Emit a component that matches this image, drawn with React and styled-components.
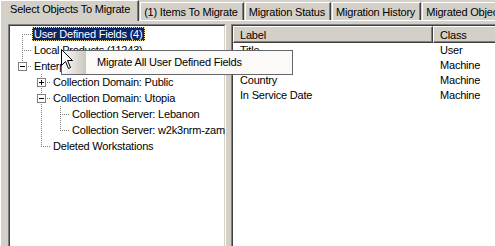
import React from 'react';
import styled, { createGlobalStyle } from 'styled-components';

const GlobalStyle = createGlobalStyle`
  html, body {
    margin: 0;
    padding: 0;
  }
  body {
    background: #d4d0c8;
    overflow: hidden;
    font-family: "Liberation Sans", Arial, sans-serif;
    font-size: 11px;
    letter-spacing: -0.2px;
    color: #000;
  }
`;

const dotV = 'repeating-linear-gradient(#808080 0 1px, transparent 1px 2px)';
const dotH = 'repeating-linear-gradient(90deg, #808080 0 1px, transparent 1px 2px)';

const Window = styled.div`
  position: relative;
  width: 495px;
  height: 246px;
  overflow: hidden;
  background: #d4d0c8;
`;

const TabStrip = styled.div`
  display: flex;
  align-items: flex-end;
  height: 21px;
  white-space: nowrap;
  background: linear-gradient(#fff, #fff) left bottom / 100% 1px no-repeat;
`;

const Tab = styled.div`
  flex: 0 0 auto;
  box-sizing: border-box;
  background: #d4d0c8;
  border-left: 1px solid #fff;
  border-top: 1px solid #fff;
  border-right: 1px solid #404040;
  box-shadow: inset -1px 0 #808080;
  line-height: 13px;
  height: ${p => (p.$active ? 21 : 18)}px;
  padding: ${p => (p.$active ? '2px 8px 0 9px' : '3px 5px 0 3px')};
  margin: ${p => (p.$active ? '0 1px 0 0' : '0 1px 1px 0')};
`;

const TabPage = styled.div`
  display: flex;
  gap: 5px;
  border-left: 1px solid #fff;
  padding: 3px 0 0 7px;
`;

const Sunken = styled.div`
  flex: 0 0 ${p => p.$w}px;
  width: ${p => p.$w}px;
  box-sizing: border-box;
  height: 240px;
  border: 1px solid;
  border-color: #808080 #fff #fff #808080;
  overflow: hidden;
`;

const SunkenInner = styled.div`
  height: 100%;
  box-sizing: border-box;
  border: 1px solid;
  border-color: #404040 #d4d0c8 #d4d0c8 #404040;
  background: #fff;
`;

const TreeBody = styled.div`
  padding: 0 0 0 3px;
`;

const Row = styled.div`
  display: flex;
  align-items: center;
  height: 16px;
  white-space: nowrap;
`;

const Rail = styled.span`
  flex: 0 0 19px;
  height: 16px;
  background: ${p => (p.$on ? dotV : 'none')} 9px 0 / 1px 16px no-repeat;
`;

const Joint = styled.span`
  flex: 0 0 19px;
  height: 16px;
  box-sizing: border-box;
  display: flex;
  align-items: center;
  padding-left: 5px;
  background-image: ${dotV}, ${dotH};
  background-repeat: no-repeat;
  background-size: 1px ${p => (p.$last ? 9 : 16) - (p.$first ? 8 : 0)}px, 10px 1px;
  background-position: 9px ${p => (p.$first ? 8 : 0)}px, 9px 8px;
`;

const Expander = styled.span`
  width: 9px;
  height: 9px;
  box-sizing: border-box;
  border: 1px solid #808080;
  background-color: #fff;
  background-image: linear-gradient(#000, #000)
    ${p => (p.$open ? '' : ', linear-gradient(#000, #000)')};
  background-size: 5px 1px ${p => (p.$open ? '' : ', 1px 5px')};
  background-position: center ${p => (p.$open ? '' : ', center')};
  background-repeat: no-repeat;
`;

const NodeLabel = styled.span`
  height: 14px;
  line-height: 12px;
  box-sizing: border-box;
  padding: 0 1px;
  border: 1px ${p => (p.$selected ? 'dotted #f0d890' : 'solid transparent')};
  background: ${p => (p.$selected ? '#0a246a' : 'transparent')};
  color: ${p => (p.$selected ? '#fff' : '#000')};
`;

const ListHeader = styled.div`
  display: flex;
  height: 17px;
`;

const HeaderCell = styled.div`
  flex: 0 0 ${p => p.$w}px;
  box-sizing: border-box;
  height: 17px;
  line-height: 17px;
  padding-left: 6px;
  border: 1px solid;
  border-color: #fff #404040 #404040 #fff;
  box-shadow: inset -1px -1px #808080;
  background: #d4d0c8;
`;

const ListRow = styled.div`
  display: flex;
  height: 15px;
  line-height: 14px;
  white-space: nowrap;
`;

const Cell = styled.div`
  flex: 0 0 ${p => p.$w}px;
  padding-left: 7px;
  box-sizing: border-box;
`;

const Menu = styled.div`
  position: absolute;
  left: 61px;
  top: 50px;
  width: 232px;
  height: 25px;
  box-sizing: border-box;
  display: flex;
  border: 1px solid #666;
  background: #fbfaf8;
  white-space: nowrap;
`;

const MenuStrip = styled.div`
  flex: 0 0 24px;
  background: linear-gradient(90deg, #fdfdfc, #c9c6bd);
`;

const MenuText = styled.div`
  padding-left: 11px;
  line-height: 23px;
`;

const Cursor = styled.svg`
  position: absolute;
  left: 61px;
  top: 49px;
`;

const tree = [
  { label: 'User Defined Fields (4)', selected: true },
  { label: 'Local Products (11243)' },
  {
    label: 'Enterprise', open: true, children: [
      { label: 'Collection Domain: Public', children: [{ label: '' }] },
      {
        label: 'Collection Domain: Utopia', open: true, children: [
          { label: 'Collection Server: Lebanon' },
          { label: 'Collection Server: w2k3nrm-zam' },
        ]
      },
      { label: 'Deleted Workstations' },
    ]
  },
];

function flatten(nodes, lasts, rows) {
  nodes.forEach((node, i) => {
    const last = i === nodes.length - 1;
    rows.push({ node, rails: lasts.map(l => !l), first: lasts.length === 0 && i === 0, last });
    if (node.open && node.children) flatten(node.children, lasts.concat(last), rows);
  });
  return rows;
}

const fields = [
  ['Title', 'User'],
  ['', 'Machine'],
  ['Country', 'Machine'],
  ['In Service Date', 'Machine'],
];

const tabs = [
  'Select Objects To Migrate',
  '(1) Items To Migrate',
  'Migration Status',
  'Migration History',
  'Migrated Objects',
];

export default function App() {
  const rows = flatten(tree, [], []);
  return (
    <Window>
      <GlobalStyle />
      <TabStrip>
        {tabs.map((t, i) => <Tab key={t} $active={i === 0}>{t}</Tab>)}
      </TabStrip>
      <TabPage>
        <Sunken $w={218}>
          <SunkenInner>
            <TreeBody>
              {rows.map(({ node, rails, first, last }, i) => (
                <Row key={i}>
                  {rails.map((on, k) => <Rail key={k} $on={on} />)}
                  <Joint $first={first} $last={last}>
                    {node.children && <Expander $open={node.open} />}
                  </Joint>
                  <NodeLabel $selected={node.selected}>{node.label}</NodeLabel>
                </Row>
              ))}
            </TreeBody>
          </SunkenInner>
        </Sunken>
        <Sunken $w={300}>
          <SunkenInner>
            <ListHeader>
              <HeaderCell $w={200}>Label</HeaderCell>
              <HeaderCell $w={100}>Class</HeaderCell>
            </ListHeader>
            {fields.map(([label, cls], i) => (
              <ListRow key={i}>
                <Cell $w={200}>{label}</Cell>
                <Cell $w={100}>{cls}</Cell>
              </ListRow>
            ))}
          </SunkenInner>
        </Sunken>
      </TabPage>
      <Menu>
        <MenuStrip />
        <MenuText>Migrate All User Defined Fields</MenuText>
      </Menu>
      <Cursor width="13" height="21" viewBox="0 0 13 21">
        <path d="M0.5 0.5 L0.5 16.5 L4.5 12.5 L7.5 19.5 L9.5 18.5 L6.5 11.5 L11.5 11.5 Z" fill="#fff" stroke="#000" strokeWidth="1" />
      </Cursor>
    </Window>
  );
}
